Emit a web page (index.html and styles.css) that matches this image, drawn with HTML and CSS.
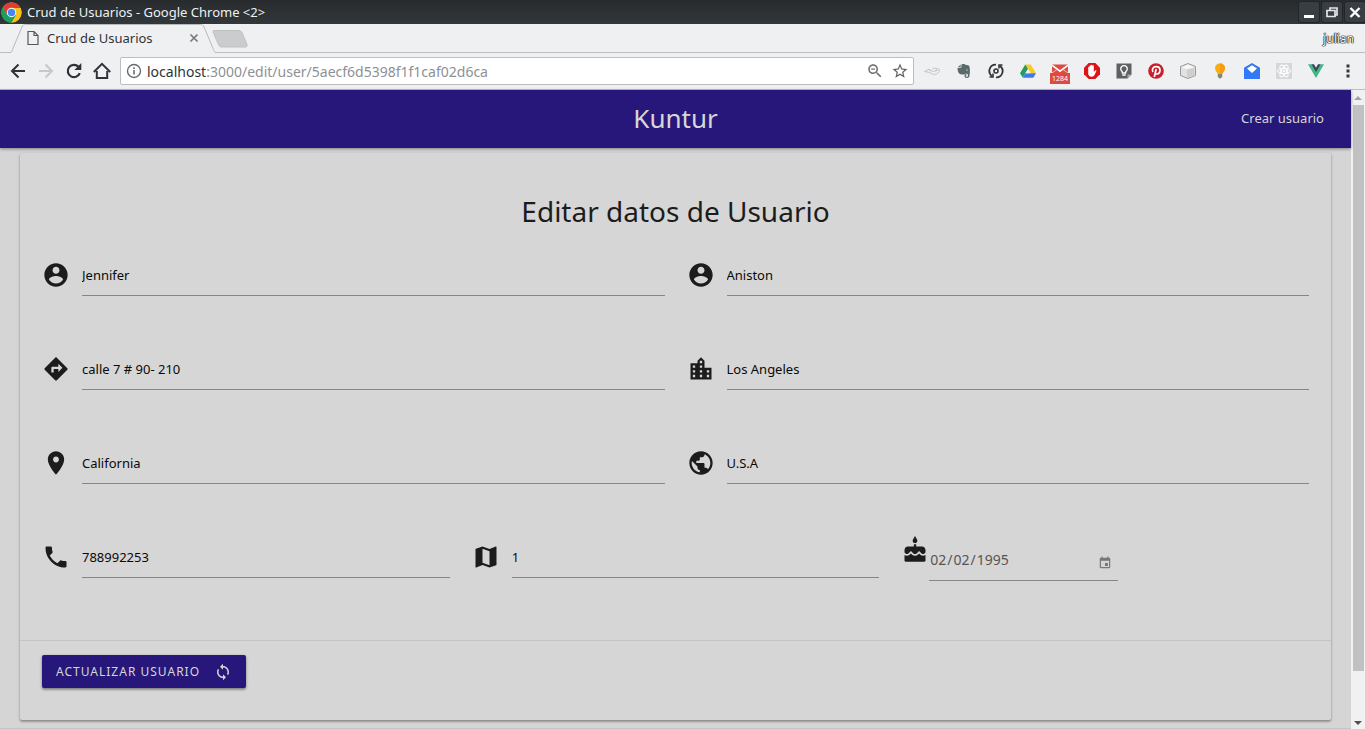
FILE: index.html
```html
<!DOCTYPE html>
<html lang="es">
<head>
<meta charset="utf-8">
<title>Crud de Usuarios</title>
<link rel="stylesheet" href="styles.css">
</head>
<body>
<div class="window">
  <header class="titlebar">
    <svg class="chrome-logo" viewBox="0 0 48 48"><circle cx="24" cy="24" r="23" fill="#fbc116"/><path d="M24 24 4.1 12.5A23 23 0 0 1 43.9 12.5H24z" fill="#dd4033"/><path d="M4.1 12.5A23 23 0 0 0 24 47l10-17.300-10-5.700-9.900 5.700z" fill="#1aa05c"/><path d="M24 13.500h20.400a23 23 0 0 1-.5 22A23 23 0 0 1 24 47l10-17.300z" fill="#fbc116"/><path d="M4.100 12.500A23 23 0 0 1 43.900 12.500L44.400 13.500H24L14 29.500z" fill="#dd4033"/><path d="M4.100 12.500A23 23 0 0 0 24 47l10-17.300H14z" fill="#1aa05c"/><circle cx="24" cy="24" r="10.800" fill="#fff"/><circle cx="24" cy="24" r="8.600" fill="#4587f3"/></svg>
    <span class="titlebar-text">Crud de Usuarios - Google Chrome &lt;2&gt;</span>
    <div class="window-buttons">
      <button class="window-button" aria-label="Minimizar"><svg viewBox="0 0 20 20"><path d="M5 13h10v3H5z" fill="#fff"/></svg></button>
      <button class="window-button" aria-label="Restaurar"><svg viewBox="0 0 20 20"><path d="M8 8V6h7v7h-2M5 8.500h8v6H5z" fill="none" stroke="#e4e6e8" stroke-width="1.700"/></svg></button>
      <button class="window-button" aria-label="Cerrar"><svg viewBox="0 0 20 20"><path d="m5.500 6 9 9m0-9-9 9" fill="none" stroke="#fff" stroke-width="2.400"/></svg></button>
    </div>
  </header>

  <div class="tabstrip">
    <div class="tab">
      <svg class="tab-shape" viewBox="0 0 206 29"><path d="M0 28.500c2 0 1.500-1 2.500-3L12 3c.8-2 1.500-2.500 3.500-2.500h175c2 0 2.700.5 3.500 2.500l9.500 22.500c1 2 .5 3 2.500 3V29H0z" fill="#eff0f1"/><path d="M0 28.500c2 0 1.500-1 2.500-3L12 3c.8-2 1.500-2.500 3.500-2.500h175c2 0 2.700.5 3.500 2.500l9.500 22.500c1 2 .5 3 2.500 3" fill="none" stroke="#b9babc"/></svg>
      <div class="tab-content">
        <svg class="tab-file" viewBox="0 0 12 16"><path d="M1 1.500h6l4 4v9H1zM7 1.500v4h4" fill="none" stroke="#55585c" stroke-width="1.200"/></svg>
        <span class="tab-title">Crud de Usuarios</span>
        <button class="tab-close" aria-label="Cerrar pestaña"><svg viewBox="0 0 10 10"><path d="m1.500 1.500 7 7m0-7-7 7" fill="none" stroke="#77797c" stroke-width="1.700"/></svg></button>
      </div>
    </div>
    <button class="new-tab" aria-label="Nueva pestaña"><svg viewBox="0 0 36 20"><path d="M2 1.500h24c2 0 3 .5 4 2l5 12c.6 1.500 0 2.500-1.500 2.500H10c-1.500 0-2.500-.5-3.300-2L1.200 3.500C.7 2 1 1.500 2 1.500z" fill="#cbcccd" stroke="#bfc0c2"/></svg></button>
    <span class="profile">julian</span>
  </div>

  <div class="toolbar">
    <div class="nav-buttons">
      <button class="nav-button" aria-label="Atrás"><svg viewBox="0 0 20 20"><path d="M17 10H4m6.500-6.500L4 10l6.500 6.500" fill="none" stroke="#2f3337" stroke-width="2"/></svg></button>
      <button class="nav-button" aria-label="Adelante"><svg viewBox="0 0 20 20"><path d="M3 10h13M9.500 3.500 16 10l-6.500 6.500" fill="none" stroke="#c6c8ca" stroke-width="2"/></svg></button>
      <button class="nav-button" aria-label="Recargar"><svg viewBox="2 2 20 20"><path d="M17.800 14.200A6.200 6.200 0 1 1 16.500 7.700" fill="none" stroke="#2f3337" stroke-width="2.200"/><path d="M19.300 4v7h-7z" fill="#2f3337"/></svg></button>
      <button class="nav-button" aria-label="Inicio"><svg viewBox="0 0 20 20"><path d="M1.800 11 10 2.800 18.200 11M4.800 10v7h10.400v-7" fill="none" stroke="#2f3337" stroke-width="2"/></svg></button>
    </div>
    <div class="address">
      <svg class="address-info" viewBox="0 0 16 16"><circle cx="8" cy="8" r="6.500" fill="none" stroke="#696c70" stroke-width="1.400"/><path d="M7.200 7h1.600v4.500H7.200zM7.200 4.300h1.600v1.600H7.200z" fill="#696c70"/></svg>
      <a class="address-url" href="#"><span class="address-host">localhost</span>:3000/edit/user/5aecf6d5398f1f1caf02d6ca</a>
      <button class="address-button" aria-label="Zoom"><svg viewBox="0 0 24 24"><path d="M15.500 14h-.79l-.28-.27C15.410 12.590 16 11.110 16 9.500 16 5.910 13.090 3 9.500 3S3 5.910 3 9.500 5.910 16 9.500 16c1.610 0 3.090-.59 4.230-1.570l.27.28v.79l5 4.990L20.490 19l-4.990-5zm-6 0C7.010 14 5 11.990 5 9.500S7.010 5 9.500 5 14 7.010 14 9.500 11.990 14 9.500 14zM7 8.700h5v1.600H7z" fill="#6b6e72"/></svg></button>
      <button class="address-button" aria-label="Marcador"><svg viewBox="0 0 24 24"><path d="M22 9.240l-7.190-.62L12 2 9.190 8.630 2 9.240l5.460 4.730L5.820 21 12 17.270 18.180 21l-1.630-7.030L22 9.240zM12 15.400l-3.760 2.270 1-4.280-3.320-2.880 4.380-.38L12 6.100l1.710 4.040 4.380.38-3.320 2.880 1 4.280L12 15.400z" fill="#5d6064"/></svg></button>
    </div>
    <div class="extensions">
      <svg viewBox="0 0 16 16"><path d="M.5 8.500 5.500 6v1.500l5 1M8 6.500c1-1.500 2.500-1.500 4-1 2 .3 3.500 0 3.500 1.500 0 2-2 4-5 4.500-2 0-2.500-1-5-2L.5 8.500" fill="none" stroke="#c3c5c6"/><path d="m11 8 2.500-1" stroke="#aaa"/></svg>
      <svg viewBox="0 0 16 16"><path d="M5.500 1.500C7 .7 9 1 9.800 2c1.500 0 3 .2 3.500 1.200.8 2.300.8 6 .2 9.300-.3 1.800-1.200 2.500-2.500 2.500-1.600 0-2.500-.8-2.500-2s.8-1.800 2-1.800v1.200c-.6 0-.9.200-.9.700s.4.700 1.100.7c.9 0 1.300-.5 1.300-1.500 0-1.200-1-1.700-2-1.800-.4.800-1 1-2 1-2.700 0-4-.2-5-1.300C1.900 9 1.500 7.200 1.500 5H4c1 0 1.500-.4 1.500-1.400z" fill="#5a6a6b"/><path d="M1.800 4.300 4.700 1.500v2.300c0 .4-.2.500-.6.500z" fill="#5a6a6b"/><path d="M10 7.300c.3-1 1.700-1 2 .2z" fill="#eee"/></svg>
      <svg viewBox="0 0 16 16"><g fill="none" stroke="#34373a" stroke-width="1.800"><path d="M8 1.600A6.300 6.300 0 0 0 4.300 13.200M8 14.400A6.300 6.300 0 0 0 11.700 2.800"/><path d="M1.500 14H5v-3.500M14.500 2H11v3.500" stroke-width="1.600"/><circle cx="8" cy="8" r="2" stroke-width="1.600"/></g></svg>
      <svg viewBox="0 0 16 16"><path d="M5.300 1.500h5.400L16 10.300h-5.400z" fill="#fbc928"/><path d="M5.300 1.500 8 6 2.700 14.500 0 10.300z" fill="#219c59"/><path d="M5.300 10.300H16l-2.700 4.400H2.700z" fill="#397df0"/><path d="m8 6 2.600 4.300H5.300z" fill="#eff0f1"/></svg>
      <span class="mail-extension"><svg viewBox="0 0 16 16"><path d="M0 1.500h16V12H0z" fill="#df4a40"/><path d="m0 2.200 8 6 8-6" fill="none" stroke="#fff" stroke-width="1.500"/><path d="m0 10 5-3.500M16 10l-5-3.500" stroke="#f5b8b4"/></svg><span class="mail-count">1284</span></span>
      <svg viewBox="0 0 16 16"><path d="M4.700 0h6.600L16 4.700v6.600L11.300 16H4.700L0 11.300V4.700z" fill="#dc1417"/><path d="M4.200 8V4.500c0-1 1.300-1 1.300 0V3c0-1 1.400-1 1.400 0v-.5c0-1 1.500-1 1.500 0V3c0-1 1.400-1 1.400 0v6l1.400-1.500c.6-.7 1.600-.2 1.200.6L10.500 12c-.6 1-1.400 1.700-3 1.700-2 0-3.300-1.200-3.300-3.200z" fill="#fff"/></svg>
      <svg viewBox="0 0 16 16"><path d="M.5.500h15v11l-4 4H.5z" fill="#5e6061"/><path d="m15.500 11.500-4 4v-4z" fill="#aaa"/><path d="M6.300 10V8.700a3.300 3.300 0 1 1 3.400 0V10zM6.300 12h3.400" fill="none" stroke="#fff" stroke-width="1.300"/></svg>
      <svg viewBox="0 0 16 16"><circle cx="8" cy="8" r="7.800" fill="#c91f2c"/><path d="M5 9C3.500 6.500 5 3.600 8.100 3.600c2.400 0 3.900 1.500 3.900 3.500 0 2.300-1.300 3.900-2.900 3.900-.9 0-1.500-.5-1.700-1.100M8.200 6 6.300 14" fill="none" stroke="#fff" stroke-width="1.700"/></svg>
      <svg viewBox="0 0 16 16"><path d="M8 .5 15.500 3.500v9L8 15.500.5 12.500v-9z" fill="#e2e2e2" stroke="#999"/><path d="m2 4.500 6-3 6 3-6 2z" fill="#f7f7f7"/><path d="m7 6.500 7.500-2v8L7 15z" fill="#cfcfcf"/></svg>
      <svg viewBox="0 0 16 16"><path d="M8 .5c-3 0-5 2.100-5 4.900 0 2.300 2.300 3.600 2.700 5.600h4.600C10.700 9 13 7.700 13 5.400 13 2.600 11 .5 8 .5z" fill="#f6b00d"/><path d="M8 .5v10.500h2.300C10.700 9 13 7.700 13 5.400 13 2.600 11 .5 8 .5z" fill="#f59b16"/><path d="M5.800 11h4.400v3L8.500 15.500h-1L5.800 14z" fill="#87857a"/></svg>
      <svg viewBox="0 0 16 16"><path d="M0 4.700 8 0l8 4.700V16H0z" fill="#3478f6"/><path d="m3 5.600 5-3.300 5 3.300L8 10z" fill="#fff"/></svg>
      <svg viewBox="0 0 16 16"><path d="M0 0h16v16H0z" fill="#d6d7d8"/><g fill="none" stroke="#fff"><ellipse cx="8" cy="8" rx="6.500" ry="2.600"/><ellipse cx="8" cy="8" rx="6.500" ry="2.600" transform="rotate(60 8 8)"/><ellipse cx="8" cy="8" rx="6.500" ry="2.600" transform="rotate(120 8 8)"/></g><circle cx="8" cy="8" r="1.300" fill="#fff"/></svg>
      <svg viewBox="0 0 16 16"><path d="M0 1.200h3.200L8 9.500l4.800-8.300H16L8 15z" fill="#41b883"/><path d="M3.200 1.200H6l2 3.500 2-3.500h2.800L8 9.500z" fill="#34495e"/></svg>
    </div>
    <button class="menu-button" aria-label="Menú"><svg viewBox="0 0 16 16"><path d="M6.500 1.500h3v3h-3zM6.500 6.500h3v3h-3zM6.500 11.500h3v3h-3z" fill="#34373a"/></svg></button>
  </div>

  <div class="viewport">
    <div class="page">
      <nav class="navbar">
        <a class="brand" href="#">Kuntur</a>
        <a class="nav-link" href="#">Crear usuario</a>
      </nav>
      <main class="main">
        <form class="card">
          <div class="card-content">
            <h1 class="card-title">Editar datos de Usuario</h1>
            <div class="row row-half">
              <label class="field"><svg class="icon" viewBox="0 0 24 24"><path d="M12 2C6.480 2 2 6.480 2 12s4.480 10 10 10 10-4.480 10-10S17.520 2 12 2zm0 3c1.660 0 3 1.340 3 3s-1.340 3-3 3-3-1.340-3-3 1.340-3 3-3zm0 14.200c-2.500 0-4.710-1.280-6-3.220.03-1.990 4-3.080 6-3.080 1.990 0 5.970 1.090 6 3.080-1.290 1.940-3.500 3.220-6 3.220z"/></svg><input class="input" type="text" aria-label="Nombre" value="Jennifer"></label>
              <label class="field"><svg class="icon" viewBox="0 0 24 24"><path d="M12 2C6.480 2 2 6.480 2 12s4.480 10 10 10 10-4.480 10-10S17.520 2 12 2zm0 3c1.660 0 3 1.340 3 3s-1.340 3-3 3-3-1.340-3-3 1.340-3 3-3zm0 14.200c-2.500 0-4.710-1.280-6-3.220.03-1.990 4-3.080 6-3.080 1.990 0 5.970 1.090 6 3.080-1.290 1.940-3.500 3.220-6 3.220z"/></svg><input class="input" type="text" aria-label="Apellido" value="Aniston"></label>
              <label class="field"><svg class="icon" viewBox="0 0 24 24"><path d="M21.710 11.290l-9-9c-.39-.39-1.020-.39-1.410 0l-9 9c-.39.39-.39 1.020 0 1.410l9 9c.39.39 1.020.39 1.410 0l9-9c.39-.38.39-1.010 0-1.410zM14 14.500V12h-4v3H8v-4c0-.55.45-1 1-1h5V7.500l3.500 3.500-3.500 3.500z"/></svg><input class="input" type="text" aria-label="Dirección" value="calle 7 # 90- 210"></label>
              <label class="field"><svg class="icon" viewBox="0 0 24 24"><path d="M15 11V5l-3-3-3 3v2H3v14h18V11h-6zm-8 8H5v-2h2v2zm0-4H5v-2h2v2zm0-4H5V9h2v2zm6 8h-2v-2h2v2zm0-4h-2v-2h2v2zm0-4h-2V9h2v2zm0-4h-2V5h2v2zm6 12h-2v-2h2v2zm0-4h-2v-2h2v2z"/></svg><input class="input" type="text" aria-label="Ciudad" value="Los Angeles"></label>
              <label class="field"><svg class="icon" viewBox="0 0 24 24"><path d="M12 2C8.130 2 5 5.130 5 9c0 5.250 7 13 7 13s7-7.750 7-13c0-3.870-3.130-7-7-7zm0 9.500c-1.380 0-2.500-1.120-2.500-2.500s1.120-2.500 2.500-2.500 2.500 1.120 2.500 2.500-1.120 2.500-2.500 2.500z"/></svg><input class="input" type="text" aria-label="Estado" value="California"></label>
              <label class="field"><svg class="icon" viewBox="0 0 24 24"><path d="M12 2C6.480 2 2 6.480 2 12s4.480 10 10 10 10-4.480 10-10S17.520 2 12 2zm-1 17.930c-3.950-.49-7-3.850-7-7.930 0-.62.08-1.210.21-1.790L9 15v1c0 1.100.9 2 2 2v1.930zm6.900-2.540c-.26-.81-1-1.390-1.900-1.390h-1v-3c0-.55-.45-1-1-1H8v-2h2c.55 0 1-.45 1-1V7h2c1.100 0 2-.9 2-2v-.41c2.930 1.190 5 4.060 5 7.410 0 2.080-.8 3.970-2.100 5.390z"/></svg><input class="input" type="text" aria-label="País" value="U.S.A"></label>
            </div>
            <div class="row row-third">
              <label class="field"><svg class="icon" viewBox="0 0 24 24"><path d="M6.620 10.790c1.440 2.830 3.760 5.140 6.590 6.590l2.200-2.200c.27-.27.67-.36 1.020-.24 1.120.37 2.330.57 3.570.57.55 0 1 .45 1 1V20c0 .55-.45 1-1 1-9.390 0-17-7.610-17-17 0-.55.45-1 1-1h3.500c.55 0 1 .45 1 1 0 1.250.2 2.450.57 3.570.11.35.03.74-.25 1.020l-2.200 2.200z"/></svg><input class="input" type="tel" aria-label="Teléfono" value="788992253"></label>
              <label class="field"><svg class="icon" viewBox="0 0 24 24"><path d="M20.500 3l-.16.03L15 5.100 9 3 3.360 4.900c-.21.07-.36.25-.36.48V20.500c0 .28.22.5.5.5l.16-.03L9 18.900l6 2.100 5.640-1.900c.21-.07.36-.25.36-.48V3.500c0-.28-.22-.5-.5-.5zM15 19l-6-2.110V5l6 2.110V19z"/></svg><input class="input" type="text" aria-label="Código postal" value="1"></label>
              <div class="date-field">
                <svg class="icon" viewBox="0 0 24 24"><path d="M12 6c1.110 0 2-.9 2-2 0-.38-.1-.73-.29-1.030L12 0l-1.710 2.970c-.19.3-.29.65-.29 1.030 0 1.100.9 2 2 2zm4.600 9.990l-1.070-1.070-1.080 1.070c-1.300 1.300-3.580 1.310-4.890 0l-1.070-1.070-1.090 1.070C6.750 16.640 5.880 17 4.960 17c-.73 0-1.400-.23-1.960-.61V21c0 .55.45 1 1 1h16c.55 0 1-.45 1-1v-4.610c-.56.38-1.230.61-1.960.61-.92 0-1.790-.36-2.440-1.010zM18 9h-5V7h-2v2H6c-1.660 0-3 1.340-3 3v1.540c0 1.080.88 1.960 1.960 1.960.52 0 1.020-.2 1.380-.57l2.140-2.130 2.130 2.130c.74.74 2.030.74 2.770 0l2.140-2.130 2.130 2.130c.37.37.86.57 1.380.57 1.080 0 1.960-.88 1.960-1.960V12C21 10.340 19.660 9 18 9z"/></svg>
                <div class="date-box">
                  <input class="input date-input" type="date" aria-label="Fecha de nacimiento" value="1995-02-02">
                  <button class="date-button" type="button" aria-label="Abrir calendario"><svg viewBox="0 0 24 24"><path d="M17 12h-5v5h5v-5zM16 1v2H8V1H6v2H5c-1.110 0-1.990.9-1.990 2L3 19c0 1.100.89 2 2 2h14c1.100 0 2-.9 2-2V5c0-1.100-.9-2-2-2h-1V1h-2zm3 18H5V8h14v11z" fill="#777"/></svg></button>
                </div>
              </div>
            </div>
          </div>
          <div class="card-action">
            <button class="submit" type="submit">ACTUALIZAR USUARIO <svg viewBox="0 0 24 24"><path d="M12 4V1L8 5l4 4V6c3.310 0 6 2.690 6 6 0 1.010-.25 1.970-.7 2.800l1.460 1.460C19.540 15.030 20 13.570 20 12c0-4.420-3.580-8-8-8zm0 14c-3.310 0-6-2.690-6-6 0-1.010.25-1.970.7-2.800L5.240 7.740C4.460 8.970 4 10.430 4 12c0 4.420 3.580 8 8 8v3l4-4-4-4v3z" fill="#d6d6d6"/></svg></button>
          </div>
        </form>
      </main>
    </div>
    <div class="scrollbar">
      <svg class="scroll-arrow" viewBox="0 0 14 15"><path d="m3 10 4-4 4 4z" fill="#a3a3a3"/></svg>
      <div class="scroll-track"><div class="scroll-thumb"></div></div>
      <svg class="scroll-arrow" viewBox="0 0 14 15"><path d="m3 7 4 4 4-4z" fill="#505050"/></svg>
    </div>
  </div>
</div>
</body>
</html>
```
FILE: styles.css
```css
* { box-sizing: border-box; }
body { margin: 0; font-family: "Noto Sans", "Open Sans", sans-serif; font-size: 13px; color: #2f3337; }
button { margin: 0; padding: 0; border: 0; background: none; font: inherit; color: inherit; }
a { color: inherit; text-decoration: none; }
svg { display: block; flex: none; }

.window { display: flex; flex-direction: column; height: 100vh; overflow: hidden; }

/* Window title bar */
.titlebar { display: flex; align-items: center; height: 24px; padding-left: 1px; background: linear-gradient(#272b2e, #32373b); color: #eff0f1; }
.chrome-logo { width: 21px; height: 21px; }
.titlebar-text { flex: 1; margin-left: 5px; }
.window-buttons { display: flex; gap: 3px; }
.window-button { width: 20px; height: 20px; border-radius: 2px; background: #383e43; box-shadow: 0 0 0 1px #22262a; }
.window-button svg { width: 20px; height: 20px; }

/* Tabs */
.tabstrip { display: flex; height: 29px; padding: 0 11px 0 10px; background: #eff0f1; box-shadow: inset 0 -1px #bcbdbf; }
.tab { position: relative; width: 206px; }
.tab-shape { position: absolute; inset: 0; width: 206px; height: 29px; }
.tab-content { position: relative; display: flex; align-items: center; height: 28px; padding: 0 17px; }
.tab-file { width: 12px; height: 16px; }
.tab-title { flex: 1; margin-left: 8px; }
.tab-close svg { width: 10px; height: 10px; }
.new-tab svg { width: 36px; height: 20px; }
.new-tab { align-self: center; margin-left: -4px; }
.profile { align-self: center; margin-left: auto; font-size: 12px; color: #fff; text-shadow: 0 0 1px #000, 0 0 1px #000, 0 0 1px #000, 0 0 1px #000; }

/* Toolbar */
.toolbar { display: flex; align-items: center; height: 37px; padding: 0 9px 0 8px; background: #eff0f1; border-bottom: 1px solid #bcbdbf; }
.nav-buttons { display: flex; gap: 8px; }
.nav-button svg { width: 20px; height: 20px; }
.address { display: flex; flex: 1; align-items: center; height: 28px; margin: 0 10px 0 8px; padding: 0 4px 0 5px; border: 1px solid #bcbdbf; border-radius: 2px; background: #fff; }
.address-info { width: 16px; height: 16px; }
.address-url { flex: 1; margin-left: 5px; font-size: 14px; color: #8e9194; }
.address-host { color: #2f3337; }
.address-button { margin-left: 7px; }
.address-button svg { width: 18px; height: 18px; }
.extensions { display: flex; gap: 16px; }
.extensions svg { width: 16px; height: 16px; }
.mail-extension { position: relative; }
.mail-count { position: absolute; left: -2px; top: 10px; width: 20px; background: #df4a40; color: #fff; font-size: 7px; line-height: 11px; text-align: center; }
.menu-button { margin-left: 16px; }
.menu-button svg { width: 16px; height: 16px; }

/* Page area */
.viewport { display: flex; flex: 1; min-height: 0; background: #d5d5d5; }
.page { flex: 1; min-width: 0; border-bottom: 1px solid #c4c4c4; background: #d5d5d5; }
.scrollbar { display: flex; flex-direction: column; width: 14px; background: #f1f1f1; }
.scroll-arrow { width: 14px; height: 15px; }
.scroll-track { flex: 1; padding: 0 1px 0 2px; }
.scroll-thumb { height: 93%; background: #c1c1c1; }

.navbar { position: relative; display: flex; align-items: center; justify-content: center; height: 58px; padding-bottom: 2px; background: #28177a; color: #d6d6d6; box-shadow: 0 1px 3px rgba(0, 0, 0, .4); }
.brand { font-size: 26px; }
.nav-link { position: absolute; right: 27px; font-size: 13px; }

.main { padding: 5px 20px 8px; }
.card { border-radius: 2px; background: #d6d6d6; box-shadow: 0 2px 2px rgba(0, 0, 0, .2), 0 1px 3px rgba(0, 0, 0, .24); }
.card-content { padding: 34px 22px 10px; }
.card-title { margin: 0 0 19px; font-size: 28px; font-weight: 400; line-height: 48px; text-align: center; color: #1c1c1c; }
.row { display: grid; column-gap: 22px; }
.row-half { grid-template-columns: 1fr 1fr; }
.row-third { grid-template-columns: 1fr 1fr 1fr; }
.field { display: flex; align-items: flex-start; height: 94px; }
.icon { width: 28px; height: 28px; margin: 7px 12px 0 0; fill: #1c1c1c; }
.input { flex: 1; min-width: 0; height: 42px; margin: 0; padding: 0; border: 0; border-bottom: 1px solid #868686; border-radius: 0; outline: 0; background: none; font: 13px "Noto Sans", "Open Sans", sans-serif; color: #0a0a0a; }
.date-field { display: flex; align-items: flex-start; }
.date-field .icon { margin: 0; }
.date-box { position: relative; width: 189px; padding-top: 3px; }
.date-input { display: block; width: 100%; font-size: 14px; color: #555; }
.date-input::-webkit-calendar-picker-indicator { display: none; }
.date-button { position: absolute; right: 6px; top: 20px; }
.date-button svg { width: 14px; height: 14px; }

.card-action { padding: 14px 22px 32px; border-top: 1px solid #c4c4c4; }
.submit { display: flex; align-items: center; gap: 14px; height: 33px; padding: 0 14px; border-radius: 2px; background: #28177a; color: #d6d6d6; font-size: 12px; letter-spacing: 1px; box-shadow: 0 2px 2px rgba(0, 0, 0, .2), 0 1px 3px rgba(0, 0, 0, .3); }
.submit svg { width: 18px; height: 18px; }
```
